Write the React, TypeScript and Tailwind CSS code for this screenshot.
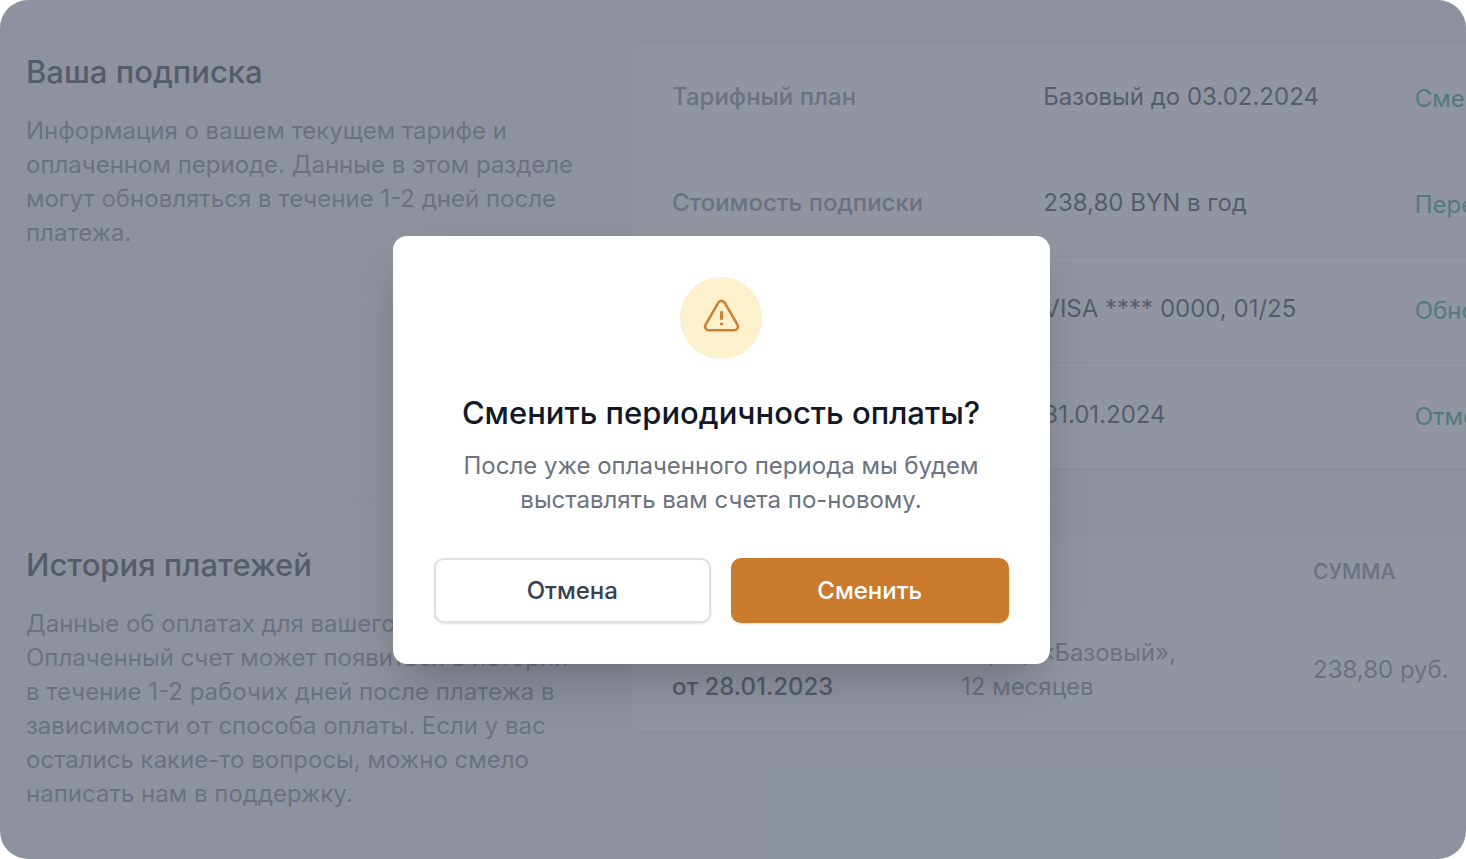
import React from "react";

interface Row {
  label: string;
  value: string;
  action: string;
}

const rows: Row[] = [
  { label: "Тарифный план", value: "Базовый до 03.02.2024", action: "Сменить" },
  { label: "Стоимость подписки", value: "238,80 BYN в год", action: "Перейти на помесячную" },
  { label: "Способ оплаты", value: "VISA **** 0000, 01/25", action: "Обновить" },
  { label: "Дата списания", value: "31.01.2024", action: "Отменить" },
];

function SectionInfo({ title, children }: { title: string; children: React.ReactNode }) {
  return (
    <div className="pr-3 pt-[7px]">
      <h2 className="text-[31px] font-medium leading-10 text-[#111827]">{title}</h2>
      <p className="mt-[22px] text-2xl leading-[34px] text-[#6b7280]">{children}</p>
    </div>
  );
}

function PlanCard() {
  return (
    <dl className="col-span-2 divide-y divide-gray-200 self-start rounded-xl bg-white text-2xl leading-[31px] shadow">
      {rows.map((row) => (
        <div key={row.label} className="grid grid-cols-3 gap-[27px] px-[41px] pb-[34px] pt-9">
          <dt className="font-medium text-[#6b7280]">{row.label}</dt>
          <dd className="text-[#111827]">{row.value}</dd>
          <dd className="whitespace-nowrap leading-[35px]">
            <a href="#" className="text-[#059669]">
              {row.action}
            </a>
          </dd>
        </div>
      ))}
    </dl>
  );
}

function PaymentsTable() {
  return (
    <div className="col-span-2 self-start overflow-hidden rounded-xl bg-white shadow">
      <table className="w-full table-fixed text-left">
        <thead className="border-b border-gray-200 bg-gray-50 text-[21px] uppercase leading-7 text-[#6b7280]">
          <tr>
            <th className="w-[289px] py-5 pl-[41px] font-medium">Счет</th>
            <th className="w-[352px] py-5 pl-[41px] font-medium">Услуга</th>
            <th className="py-5 pl-[41px] font-medium">Сумма</th>
          </tr>
        </thead>
        <tbody className="text-2xl leading-[34px] text-[#6b7280]">
          <tr>
            <td className="pb-[27px] pl-[41px] pt-[29px] font-medium text-[#111827]">
              Счет
              <br />
              от 28.01.2023
            </td>
            <td className="pb-[27px] pl-[41px] pt-[29px]">
              Тариф «Базовый»,
              <br />
              12 месяцев
            </td>
            <td className="pb-[27px] pl-[41px] pt-[29px]">238,80 руб.</td>
          </tr>
        </tbody>
      </table>
    </div>
  );
}

function ConfirmDialog() {
  return (
    <div
      role="dialog"
      aria-modal="true"
      aria-labelledby="dialog-title"
      className="flex w-full max-w-[657px] flex-col items-center rounded-[14px] bg-white p-[41px] text-center shadow-2xl"
    >
      <div className="flex size-[82px] items-center justify-center rounded-full bg-[#fcf1cc]">
        <svg
          viewBox="0 0 24 24"
          fill="none"
          stroke="currentColor"
          strokeWidth={1.5}
          strokeLinejoin="round"
          className="size-[41px] text-[#d08033]"
        >
          <path d="M2.697 16.126c-.866 1.5.217 3.374 1.948 3.374h14.71c1.73 0 2.813-1.874 1.948-3.374L13.949 3.378c-.866-1.5-3.032-1.5-3.898 0L2.697 16.126z" />
          <path strokeWidth={1.8} d="M12 8.4v4.9M12 15.1v1.3" />
        </svg>
      </div>
      <h3 id="dialog-title" className="mt-[34px] text-[31px] font-medium leading-10 text-[#111827]">
        Сменить периодичность оплаты?
      </h3>
      <p className="mt-4 px-5 text-2xl leading-[34px] text-[#6b7280]">
        После уже оплаченного периода мы будем выставлять вам счета по-новому.
      </p>
      <div className="mt-[41px] grid w-full grid-cols-2 gap-5 text-2xl font-medium leading-[33px]">
        <button
          type="button"
          className="rounded-[10px] border-2 border-[#dfe1e6] bg-white py-3.5 text-[#374151] shadow-sm"
        >
          Отмена
        </button>
        <button type="button" className="rounded-[10px] bg-[#c97a2d] py-4 text-white shadow-sm">
          Сменить
        </button>
      </div>
    </div>
  );
}

export default function App() {
  return (
    <main className="relative min-h-screen overflow-hidden rounded-[28px] bg-[#f3f4f6] pl-[26px] font-['Inter',sans-serif]">
      {/* the content is wider than the window and runs off its right edge */}
      <div className="w-[calc(100%+334px)]">
        <section className="grid grid-cols-3 gap-[41px] pb-[34px] pt-[45px]">
          <SectionInfo title="Ваша подписка">
            Информация о вашем текущем тарифе и оплаченном периоде. Данные в этом разделе могут
            обновляться в течение 1-2 дней после платежа.
          </SectionInfo>
          <PlanCard />
        </section>
        <section className="grid grid-cols-3 gap-[41px] border-t border-gray-200 pt-[35px]">
          <SectionInfo title="История платежей">
            Данные об оплатах для вашего аккаунта. Оплаченный счет может появиться в истории в
            течение 1-2 рабочих дней после платежа в зависимости от способа оплаты. Если у вас
            остались какие-то вопросы, можно смело написать нам в поддержку.
          </SectionInfo>
          <PaymentsTable />
        </section>
      </div>
      <div className="absolute inset-0 flex items-center justify-center bg-[#6b7280]/75 pr-6 pt-10">
        <ConfirmDialog />
      </div>
    </main>
  );
}
